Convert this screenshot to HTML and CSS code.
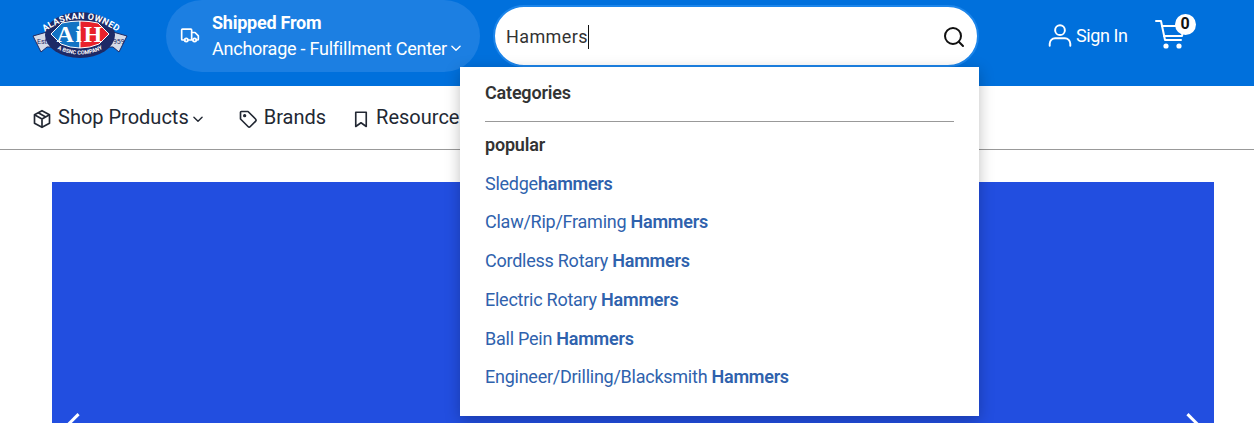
FILE: index.html
```html
<!DOCTYPE html>
<html lang="en">
<head>
    <meta charset="UTF-8">
    <meta name="viewport" content="width=device-width, initial-scale=1.0">
    <title>AIH - Hammers</title>
    <link rel="stylesheet" href="styles.css">
</head>
<body>
    <header class="topbar">
        <a class="logo" href="#">
            <svg width="96" height="52" viewBox="0 0 96 52">
                <path d="M1 25 L15 21 L21 36 L15 36 L9 41z" fill="#d5dbe8" stroke="#1d2a66"/>
                <path d="M95 25 L81 21 L75 36 L81 36 L87 41z" fill="#d5dbe8" stroke="#1d2a66"/>
                <ellipse cx="48" cy="24" rx="35" ry="23" fill="#1d2a66"/>
                <path d="M19 23 L30 12 Q39 10 48 10 V37 Q38 37 29 33z" fill="#1273c4" stroke="#fff"/>
                <path d="M77 23 L66 12 Q57 10 48 10 V37 Q58 37 67 33z" fill="#e8202a" stroke="#fff"/>
                <text class="logo-big" x="48" y="31" text-anchor="middle">AiH</text>
                <path id="logoArc" d="M14 20 Q48 -4 84 20" fill="none"/>
                <text class="logo-small"><textPath href="#logoArc" startOffset="50%" text-anchor="middle">ALASKAN OWNED</textPath></text>
                <path id="logoLow" d="M20 35 Q48 52 76 35" fill="none"/>
                <text class="logo-tiny"><textPath href="#logoLow" startOffset="50%" text-anchor="middle">A BSNC COMPANY</textPath></text>
                <text class="logo-side" x="5" y="33">Est.</text>
                <text class="logo-side" x="77" y="33">1959</text>
            </svg>
        </a>

        <div class="shipped">
            <svg class="truck" width="20" height="20" viewBox="0 0 24 24" fill="none" stroke="currentColor" stroke-width="2" stroke-linecap="round" stroke-linejoin="round">
                <path d="M6 18H3a1 1 0 0 1-1-1V6a1 1 0 0 1 1-1h10a1 1 0 0 1 1 1v11"/>
                <path d="M14 9h4l4 4v4a1 1 0 0 1-1 1h-1"/>
                <path d="M10 18h5"/>
                <circle cx="7.5" cy="18" r="2"/>
                <circle cx="17.5" cy="18" r="2"/>
            </svg>
            <div class="shipped-text">
                <strong>Shipped From</strong>
                <span class="shipped-place">Anchorage - Fulfillment Center
                    <svg width="14" height="14" viewBox="0 0 24 24" fill="none" stroke="currentColor" stroke-width="2.4" stroke-linecap="round" stroke-linejoin="round"><path d="M5 9l7 7 7-7"/></svg>
                </span>
            </div>
        </div>

        <div class="search">
            <span class="search-value">Hammers</span>
            <svg width="24" height="24" viewBox="0 0 24 24" fill="none" stroke="#111" stroke-width="2" stroke-linecap="round"><circle cx="11" cy="11" r="8"/><path d="M21 21l-4.2-4.2"/></svg>
        </div>

        <a class="signin" href="#">
            <svg width="26" height="26" viewBox="0 0 24 24" fill="none" stroke="currentColor" stroke-width="1.8" stroke-linecap="round"><circle cx="12" cy="7.5" r="4.5"/><path d="M2.5 22v-2a5 5 0 0 1 5-5h9a5 5 0 0 1 5 5v2"/></svg>
            Sign In
        </a>

        <a class="cart" href="#">
            <svg width="32" height="32" viewBox="0 0 32 32" fill="none" stroke="currentColor" stroke-width="2" stroke-linecap="round" stroke-linejoin="round">
                <path d="M2 3h5l4 19h16"/>
                <path d="M8 8h22l-2 10H10"/>
                <circle cx="12" cy="28" r="1.6" fill="currentColor"/>
                <circle cx="25" cy="28" r="1.6" fill="currentColor"/>
            </svg>
            <span class="cart-count">0</span>
        </a>
    </header>

    <nav class="mainnav">
        <a class="nav-item" href="#">
            <svg width="20" height="20" viewBox="0 0 24 24" fill="none" stroke="currentColor" stroke-width="2" stroke-linejoin="round"><path d="M12 2l9 5v10l-9 5-9-5V7z"/><path d="M3 7l9 5 9-5M12 12v10M7.5 4.5l9 5"/></svg>
            <span>Shop Products</span>
            <svg class="nav-caret" width="14" height="14" viewBox="0 0 24 24" fill="none" stroke="currentColor" stroke-width="2.4" stroke-linecap="round" stroke-linejoin="round"><path d="M5 9l7 7 7-7"/></svg>
        </a>
        <a class="nav-item brands" href="#">
            <svg width="20" height="20" viewBox="0 0 24 24" fill="none" stroke="currentColor" stroke-width="2" stroke-linejoin="round"><path d="M3 4a1 1 0 0 1 1-1h8l9 9a2 2 0 0 1 0 2.8l-6.2 6.2a2 2 0 0 1-2.8 0l-9-9z"/><circle cx="8" cy="8" r="1" fill="currentColor"/></svg>
            <span>Brands</span>
        </a>
        <a class="nav-item resources" href="#">
            <svg width="18" height="20" viewBox="0 0 24 24" fill="none" stroke="currentColor" stroke-width="2.2" stroke-linejoin="round"><path d="M5 3h14v19l-7-5-7 5z"/></svg>
            <span>Resources</span>
        </a>
    </nav>

    <main class="hero">
        <span class="arrow arrow-left"></span>
        <span class="arrow arrow-right"></span>
    </main>

    <div class="dropdown">
        <h4 class="drop-title">Categories</h4>
        <h4 class="drop-group">popular</h4>
        <ul class="drop-list">
            <li><a href="#">Sledge<b>hammers</b></a></li>
            <li><a href="#">Claw/Rip/Framing <b>Hammers</b></a></li>
            <li><a href="#">Cordless Rotary <b>Hammers</b></a></li>
            <li><a href="#">Electric Rotary <b>Hammers</b></a></li>
            <li><a href="#">Ball Pein <b>Hammers</b></a></li>
            <li><a href="#">Engineer/Drilling/Blacksmith <b>Hammers</b></a></li>
        </ul>
    </div>
</body>
</html>
```

FILE: styles.css
```css
html, body {
    height: 423px;
    overflow: hidden;
}
body {
    margin: 0;
    font-family: Roboto, Arial, sans-serif;
    background: #fff;
    color: #222;
    position: relative;
}
a {
    color: inherit;
    text-decoration: none;
}

/* top bar */
.topbar {
    height: 86px;
    background: #0070dc;
    color: #fff;
    display: flex;
    align-items: flex-start;
}
.logo {
    margin: 11px 0 0 32px;
    width: 134px;
}
.logo-big {
    font-family: "Liberation Serif", serif;
    font-size: 24px;
    font-weight: 700;
    letter-spacing: 1.5px;
    fill: #fff;
}
.logo-small {
    font-size: 9px;
    font-weight: 700;
    letter-spacing: 0.3px;
    fill: #fff;
}
.logo-tiny {
    font-size: 5.5px;
    font-weight: 700;
    fill: #fff;
}
.logo-side {
    font-size: 7px;
    fill: #1d2a66;
}
.shipped {
    width: 314px;
    height: 72px;
    background: #1c7fe2;
    border-radius: 36px;
    display: flex;
    align-items: center;
    gap: 12px;
    padding: 0 0 2px 14px;
    box-sizing: border-box;
}
.truck {
    flex: none;
}
.shipped-text {
    display: flex;
    flex-direction: column;
    gap: 5px;
    font-size: 18px;
    line-height: 21px;
    letter-spacing: -0.24px;
}
.shipped-text strong {
    font-weight: 700;
}
.shipped-place {
    white-space: nowrap;
    display: flex;
    align-items: center;
    gap: 2px;
}
.search {
    width: 486px;
    height: 62px;
    margin: 5px 0 0 13px;
    box-sizing: border-box;
    background: #fff;
    border: 2px solid #1c85ea;
    border-radius: 31px;
    display: flex;
    align-items: center;
    justify-content: space-between;
    padding: 2px 11px 0;
    color: #333;
    font-size: 18px;
    letter-spacing: 0.4px;
}
.search-value {
    border-right: 1px solid #111;
    line-height: 24px;
}
.signin {
    margin: 22px 0 0 68px;
    display: flex;
    align-items: center;
    gap: 3px;
    font-size: 18px;
    letter-spacing: -0.4px;
}
.cart {
    margin: 18px 0 0 26px;
    position: relative;
    display: block;
    height: 32px;
}
.cart-count {
    position: absolute;
    top: -4px;
    left: 21px;
    width: 21px;
    height: 21px;
    border-radius: 50%;
    background: #fff;
    color: #111;
    font-size: 16px;
    font-weight: 700;
    text-align: center;
    line-height: 20px;
}

/* nav row */
.mainnav {
    height: 64px;
    box-sizing: border-box;
    border-bottom: 1px solid #999;
    display: flex;
    align-items: center;
    padding: 0 0 2px 32px;
    font-size: 20px;
    color: #222833;
}
.nav-item {
    display: flex;
    align-items: center;
    gap: 6px;
}
.nav-item svg {
    margin-top: 4px;
}
.nav-caret {
    margin-left: -4px;
}
.brands {
    margin-left: 33px;
}
.resources {
    margin-left: 26px;
}

/* banner */
.hero {
    margin: 32px 40px 0 52px;
    height: 241px;
    background: #224ee0;
    position: relative;
}
.arrow {
    position: absolute;
    top: 235px;
    width: 16px;
    height: 16px;
    border-top: 3px solid #fff;
    border-left: 3px solid #fff;
}
.arrow-left {
    left: 16px;
    transform: rotate(-45deg);
}
.arrow-right {
    right: 16px;
    transform: rotate(135deg);
}

/* search suggestions */
.dropdown {
    position: absolute;
    top: 67px;
    left: 460px;
    width: 519px;
    height: 349px;
    box-sizing: border-box;
    padding: 14px 25px 0;
    background: #fff;
    box-shadow: 0 4px 14px rgba(0, 0, 0, 0.25);
}
.drop-title, .drop-group {
    margin: 0;
    font-size: 18px;
    line-height: 24px;
    font-weight: 600;
    color: #333;
    letter-spacing: -0.2px;
}
.drop-title {
    padding-bottom: 16px;
    border-bottom: 1px solid #999;
}
.drop-group {
    margin-top: 11px;
}
.drop-list {
    list-style: none;
    margin: 14.7px 0 0;
    padding: 0;
    font-size: 18px;
    letter-spacing: -0.25px;
    color: #2f62ad;
}
.drop-list li {
    height: 38.75px;
    line-height: 24px;
}
.drop-list b {
    font-weight: 600;
}
```
